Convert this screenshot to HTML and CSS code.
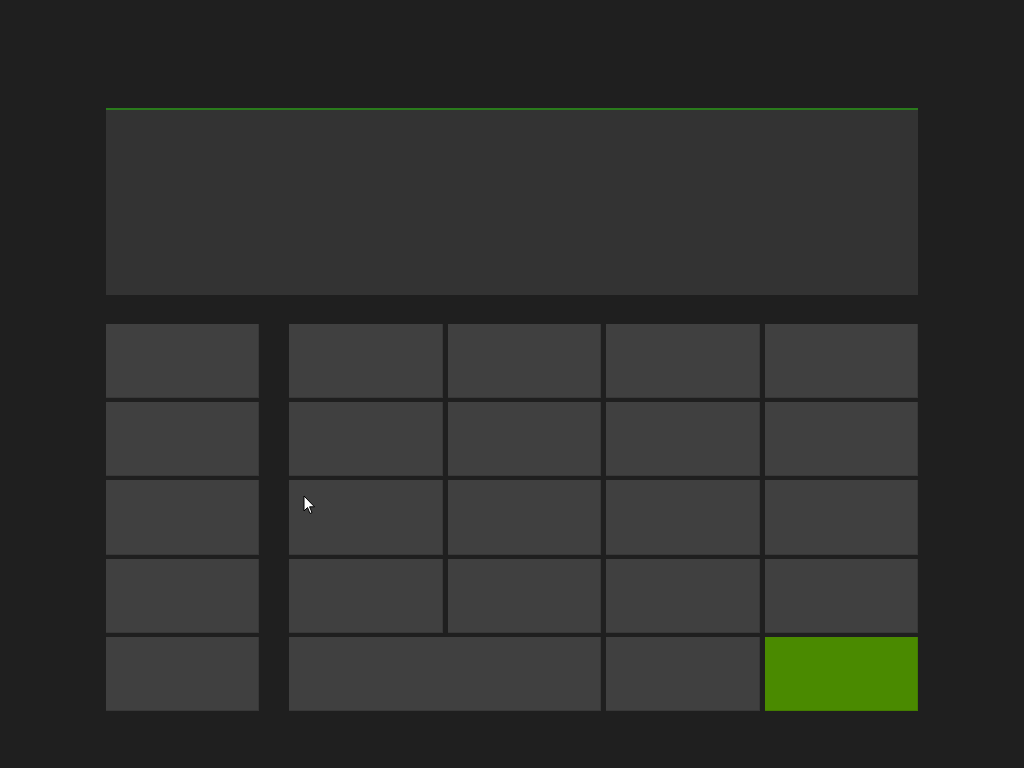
FILE: index.html
```html
<!DOCTYPE html>
<html>
<head>
<meta charset="utf-8">
<link rel="stylesheet" href="styles.css">
</head>
<body>
<div class="calc">
  <div class="display"></div>
  <div class="keypad">
    <div class="side">
      <div class="key"></div>
      <div class="key"></div>
      <div class="key"></div>
      <div class="key"></div>
      <div class="key"></div>
    </div>
    <div class="main">
      <div class="key"></div><div class="key"></div><div class="key"></div><div class="key"></div>
      <div class="key"></div><div class="key"></div><div class="key"></div><div class="key"></div>
      <div class="key"></div><div class="key"></div><div class="key"></div><div class="key"></div>
      <div class="key"></div><div class="key"></div><div class="key"></div><div class="key"></div>
      <div class="key wide"></div><div class="key"></div><div class="key go"></div>
    </div>
  </div>
</div>
<svg class="cursor" width="14" height="22" viewBox="0 0 14 22"><path d="M1 1 L1 16 L4.5 12.5 L7 18.5 L9 17.6 L6.6 11.8 L11.5 11.8 Z" fill="#fff" stroke="#000" stroke-width="1"/></svg>
</body>
</html>
```
FILE: styles.css
```css
html, body {
  margin: 0;
  padding: 0;
  background: #1f1f1f;
  width: 1024px;
  height: 768px;
  overflow: hidden;
  font-family: "Liberation Sans", Arial, sans-serif;
}
.calc {
  padding: 108px 0 0 106px;
  width: 812px;
  display: flex;
  flex-direction: column;
  gap: 29px;
}
.display {
  height: 185px;
  background: #333333;
  border-top: 2px solid #2a7a1c;
}
.keypad {
  display: flex;
  gap: 30px;
  height: 387px;
}
.side {
  width: 153px;
  display: grid;
  grid-template-rows: repeat(5, 1fr);
  row-gap: 4px;
}
.main {
  flex: 1;
  display: grid;
  grid-template-columns: repeat(4, 1fr);
  grid-template-rows: repeat(5, 1fr);
  column-gap: 5px;
  row-gap: 4px;
}
.key {
  background: #404040;
  box-shadow: inset -1px -1px 0 #383838;
}
.key.wide {
  grid-column: span 2;
}
.key.go {
  background: #4a8a00;
  box-shadow: inset -1px -1px 0 #437c00;
}
.cursor {
  position: absolute;
  left: 303px;
  top: 495px;
}
```
